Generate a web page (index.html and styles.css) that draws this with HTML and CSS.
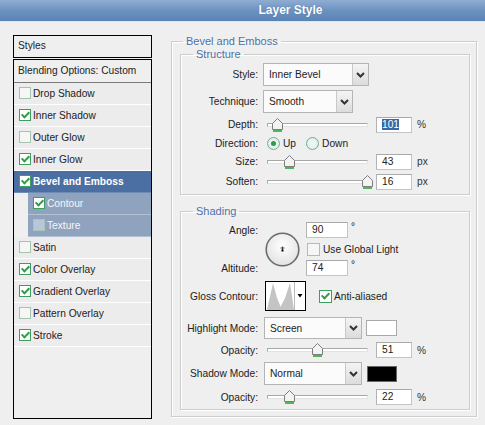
FILE: index.html
```html
<!DOCTYPE html>
<html lang="en">
<head>
  <meta charset="UTF-8">
  <title>Layer Style</title>
  <link rel="stylesheet" href="styles.css">
</head>
<body>
  <div class="titlebar">Layer Style</div>

  <div class="dialog">
    <!-- Lista de estilos -->
    <aside class="sidebar">
      <div class="styles-head">Styles</div>
      <ul class="style-list">
        <li class="blending">Blending Options: Custom</li>
        <li><span class="check"></span>Drop Shadow</li>
        <li><span class="check on"></span>Inner Shadow</li>
        <li><span class="check"></span>Outer Glow</li>
        <li><span class="check on"></span>Inner Glow</li>
        <li class="active"><span class="check on"></span>Bevel and Emboss</li>
        <li class="sub"><span class="check on"></span>Contour</li>
        <li class="sub"><span class="check"></span>Texture</li>
        <li><span class="check"></span>Satin</li>
        <li><span class="check on"></span>Color Overlay</li>
        <li><span class="check on"></span>Gradient Overlay</li>
        <li><span class="check"></span>Pattern Overlay</li>
        <li><span class="check on"></span>Stroke</li>
      </ul>
    </aside>

    <main class="options">
      <fieldset class="group">
        <legend>Bevel and Emboss</legend>

        <!-- Structure -->
        <fieldset class="panel structure">
          <legend>Structure</legend>

          <div class="row row-select first">
            <span class="lbl">Style:</span>
            <div class="select w-style">
              <span class="value">Inner Bevel</span>
              <span class="arrow"><svg width="9" height="6" viewBox="0 0 9 6"><polyline points="1,1 4.5,4.5 8,1" fill="none" stroke="#333" stroke-width="2"/></svg></span>
            </div>
          </div>

          <div class="row row-select gap4">
            <span class="lbl">Technique:</span>
            <div class="select w-tech">
              <span class="value">Smooth</span>
              <span class="arrow"><svg width="9" height="6" viewBox="0 0 9 6"><polyline points="1,1 4.5,4.5 8,1" fill="none" stroke="#333" stroke-width="2"/></svg></span>
            </div>
          </div>

          <div class="row row-slider gap3">
            <span class="lbl">Depth:</span>
            <div class="slider">
              <div class="track"></div>
              <span class="thumb" style="left: 5px"><svg width="11" height="14" viewBox="0 0 11 14"><path d="M0.5 5.5 L5.5 0.5 L10.5 5.5 L10.5 11.5 L0.5 11.5 Z" fill="#f3f3f3" stroke="#7d7d7d"/><rect x="1" y="12" width="9" height="2" fill="#4fb65a"/></svg></span>
            </div>
            <span class="num"><span class="selected">101</span></span>
            <span class="unit">%</span>
          </div>

          <div class="row row-radio">
            <span class="lbl">Direction:</span>
            <span class="radio on"></span><span class="radio-text">Up</span>
            <span class="radio down"></span><span class="radio-text">Down</span>
          </div>

          <div class="row row-slider">
            <span class="lbl">Size:</span>
            <div class="slider">
              <div class="track"></div>
              <span class="thumb" style="left: 17px"><svg width="11" height="14" viewBox="0 0 11 14"><path d="M0.5 5.5 L5.5 0.5 L10.5 5.5 L10.5 11.5 L0.5 11.5 Z" fill="#f3f3f3" stroke="#7d7d7d"/><rect x="1" y="12" width="9" height="2" fill="#4fb65a"/></svg></span>
            </div>
            <span class="num">43</span>
            <span class="unit">px</span>
          </div>

          <div class="row row-slider gap3">
            <span class="lbl">Soften:</span>
            <div class="slider">
              <div class="track"></div>
              <span class="thumb" style="left: 95px"><svg width="11" height="14" viewBox="0 0 11 14"><path d="M0.5 5.5 L5.5 0.5 L10.5 5.5 L10.5 11.5 L0.5 11.5 Z" fill="#f3f3f3" stroke="#7d7d7d"/><rect x="1" y="12" width="9" height="2" fill="#4fb65a"/></svg></span>
            </div>
            <span class="num">16</span>
            <span class="unit">px</span>
          </div>
        </fieldset>

        <!-- Shading -->
        <fieldset class="panel shading">
          <legend>Shading</legend>

          <div class="angle-grid">
            <span class="lbl lbl-angle">Angle:</span>
            <div class="dial">
              <svg width="35" height="35" viewBox="0 0 35 35">
                <defs>
                  <radialGradient id="dialFill" cx="50%" cy="40%" r="60%">
                    <stop offset="0" stop-color="#ffffff"/>
                    <stop offset="1" stop-color="#e2e2e2"/>
                  </radialGradient>
                </defs>
                <circle cx="17.5" cy="17.5" r="16.3" fill="url(#dialFill)" stroke="#6c6c6c" stroke-width="1.6"/>
                <line x1="17.5" y1="14.5" x2="17.5" y2="18" stroke="#444" stroke-width="1"/>
                <line x1="15.5" y1="16" x2="19.5" y2="16" stroke="#444" stroke-width="1"/>
                <rect x="16.5" y="17.5" width="2" height="2" fill="#000"/>
              </svg>
            </div>
            <div class="angle-field">
              <span class="num num-wide">90</span><span class="deg">°</span>
            </div>
            <label class="global">
              <span class="check"></span>Use Global Light
            </label>
            <span class="lbl lbl-alt">Altitude:</span>
            <div class="alt-field">
              <span class="num num-wide">74</span><span class="deg">°</span>
            </div>
          </div>

          <div class="row row-gloss">
            <span class="lbl">Gloss Contour:</span>
            <div class="contour">
              <svg width="41" height="30" viewBox="0 0 41 30">
                <rect x="0.5" y="0.5" width="40" height="29" fill="#fff" stroke="#000"/>
                <polygon points="2,29 8,2 12,17 17,29" fill="#c4c4c4"/>
                <polygon points="14,29 20,17 25,2 29,29" fill="#c4c4c4"/>
                <line x1="29.5" y1="1" x2="29.5" y2="29" stroke="#bbb"/>
                <polygon points="32.5,13 37.5,13 35,16.5" fill="#000"/>
              </svg>
            </div>
            <label class="anti">
              <span class="check on"></span>Anti-aliased
            </label>
          </div>

          <div class="row row-mode gap6">
            <span class="lbl">Highlight Mode:</span>
            <div class="select w-mode">
              <span class="value">Screen</span>
              <span class="arrow"><svg width="9" height="6" viewBox="0 0 9 6"><polyline points="1,1 4.5,4.5 8,1" fill="none" stroke="#333" stroke-width="2"/></svg></span>
            </div>
            <span class="swatch white"></span>
          </div>

          <div class="row row-opacity gap3">
            <span class="lbl">Opacity:</span>
            <div class="slider">
              <div class="track"></div>
              <span class="thumb" style="left: 45px"><svg width="11" height="14" viewBox="0 0 11 14"><path d="M0.5 5.5 L5.5 0.5 L10.5 5.5 L10.5 11.5 L0.5 11.5 Z" fill="#f3f3f3" stroke="#7d7d7d"/><rect x="1" y="12" width="9" height="2" fill="#4fb65a"/></svg></span>
            </div>
            <span class="num">51</span>
            <span class="unit">%</span>
          </div>

          <div class="row row-shadow gap4">
            <span class="lbl">Shadow Mode:</span>
            <div class="select w-mode">
              <span class="value">Normal</span>
              <span class="arrow"><svg width="9" height="6" viewBox="0 0 9 6"><polyline points="1,1 4.5,4.5 8,1" fill="none" stroke="#333" stroke-width="2"/></svg></span>
            </div>
            <span class="swatch black"></span>
          </div>

          <div class="row row-opacity gap4">
            <span class="lbl">Opacity:</span>
            <div class="slider">
              <div class="track"></div>
              <span class="thumb" style="left: 17px"><svg width="11" height="14" viewBox="0 0 11 14"><path d="M0.5 5.5 L5.5 0.5 L10.5 5.5 L10.5 11.5 L0.5 11.5 Z" fill="#f3f3f3" stroke="#7d7d7d"/><rect x="1" y="12" width="9" height="2" fill="#4fb65a"/></svg></span>
            </div>
            <span class="num">22</span>
            <span class="unit">%</span>
          </div>
        </fieldset>
      </fieldset>
    </main>
  </div>
</body>
</html>
```

FILE: styles.css
```css
* {
  box-sizing: border-box;
  margin: 0;
  padding: 0;
}

body {
  width: 485px;
  height: 425px;
  overflow: hidden;
  background-color: #efefef;
  color: #222;
  font-family: Tahoma, "Liberation Sans", Arial, sans-serif;
  font-size: 10.2px;
}

/* Barra de título */
.titlebar {
  height: 22px;
  padding-left: 96px;
  text-align: center;
  line-height: 21px;
  font-size: 12px;
  font-weight: bold;
  color: #fff;
  background: linear-gradient(#8eadd2, #6c92c0 50%, #5a83b6);
  border-bottom: 1px solid #dde4ee;
  text-shadow: 0 0 1px #3e628f;
}

.dialog {
  display: flex;
  gap: 19px;
  padding: 13px 0 0 13px;
}

/* Lista lateral */
.sidebar {
  width: 139px;
  display: flex;
  flex-direction: column;
  gap: 1px;
}

.styles-head {
  height: 23px;
  border: 1px solid #000;
  line-height: 20px;
  padding-left: 4px;
}

.style-list {
  list-style: none;
  border: 1px solid #000;
  height: 360px;
}

.style-list li {
  height: 22px;
  border-bottom: 1px solid #fff;
  display: flex;
  align-items: center;
  gap: 2px;
  padding-left: 5px;
  padding-bottom: 1px;
  background-color: #ececec;
}

.style-list li.blending {
  height: 23px;
  border-bottom: 1px solid #7a7a7a;
  padding-left: 4px;
  background-color: #efefef;
}

.style-list li.active {
  background-color: #4b6fa3;
  color: #fff;
  font-weight: bold;
  border-bottom-color: #6f8cb5;
}

.style-list li.sub {
  margin-left: 14px;
  background-color: #8fa3bf;
  color: #f4f6fa;
  border-bottom-color: #b3c1d4;
}

/* Caixas de seleção */
.check {
  position: relative;
  flex: none;
  width: 12px;
  height: 12px;
  border: 1px solid #a3c4ad;
  background-color: #f6f6f6;
}

.check.on {
  border-color: #3f9d5e;
  background-color: #fff;
}

.check.on::after {
  content: "";
  position: absolute;
  left: 3px;
  top: 0;
  width: 3px;
  height: 6px;
  border: solid #2f9a48;
  border-width: 0 2px 2px 0;
  transform: rotate(45deg);
}

.sub .check {
  background-color: #b9c6d8;
  border-color: #a9c7b8;
}

.sub .check.on {
  background-color: #fff;
  border-color: #3f9d5e;
}

/* Painel de opções */
.options {
  width: 306px;
}

fieldset {
  border: 1px solid #cdcdcd;
  box-shadow: inset 1px 1px 0 #fff, 1px 1px 0 #fff;
}

legend {
  font-size: 11px;
  line-height: 13px;
  color: #4d72a8;
  padding: 0 3px;
}

.group {
  padding: 0 6px 6px 8px;
}

.group > legend {
  margin-left: 3px;
}

.panel {
  padding: 0 0 4px 0;
}

.panel > legend {
  margin-left: 12px;
}

.shading {
  margin-top: 10px;
}

.row {
  display: flex;
  align-items: center;
}

.lbl {
  flex: none;
  width: 77px;
  margin-right: 5px;
  text-align: right;
}

.first { margin-top: 2px; }
.gap3 { margin-top: 3px; }
.gap4 { margin-top: 4px; }
.gap6 { margin-top: 6px; }

.row-select { height: 23px; }
.row-slider { height: 17px; }
.row-radio { height: 20px; }
.row-opacity { height: 16px; }
.row-mode { height: 22px; }
.row-shadow { height: 23px; }

/* Listas suspensas */
.select {
  display: flex;
  height: 100%;
  border: 1px solid #b4b4b4;
  background-color: #fbfbfb;
}

.select .value {
  flex: 1;
  padding-left: 5px;
  align-self: center;
}

.select .arrow {
  width: 16px;
  display: flex;
  align-items: center;
  justify-content: center;
  border-left: 1px solid #c9c9c9;
  background: linear-gradient(#f4f4f4, #dcdcdc);
}

.w-style { width: 106px; }
.w-tech { width: 90px; }
.w-mode { width: 98px; margin-left: 1px; }

/* Controles deslizantes */
.slider {
  position: relative;
  width: 101px;
  height: 14px;
  margin-left: 4px;
}

.track {
  position: absolute;
  left: 0;
  right: 0;
  top: 5px;
  height: 4px;
  border: 1px solid #a8a8a8;
  border-bottom-color: #e2e2e2;
  border-right-color: #e2e2e2;
  background-color: #fff;
}

.thumb {
  position: absolute;
  top: 0;
  width: 11px;
  height: 14px;
}

.thumb svg {
  display: block;
}

.num {
  flex: none;
  width: 36px;
  height: 16px;
  margin-left: 8px;
  padding-left: 5px;
  line-height: 14px;
  border: 1px solid #c4c4c4;
  border-top-color: #a9a9a9;
  border-left-color: #b3b3b3;
  background-color: #fff;
}

.selected {
  background-color: #3a67a8;
  color: #fff;
}

.unit {
  margin-left: 5px;
  color: #333;
}

/* Botões de opção */
.radio {
  position: relative;
  flex: none;
  width: 13px;
  height: 13px;
  margin-left: 4px;
  border: 1px solid #78aa92;
  border-radius: 50%;
  background: radial-gradient(#f4faf8, #d6ebe4);
}

.radio.on::after {
  content: "";
  position: absolute;
  left: 3px;
  top: 3px;
  width: 5px;
  height: 5px;
  border-radius: 50%;
  background-color: #2f9a48;
}

.radio.down {
  margin-left: 10px;
}

.radio-text {
  margin-left: 3px;
}

/* Ângulo e altitude */
.angle-grid {
  display: grid;
  grid-template-columns: 82px 43px 1fr;
  grid-template-rows: 16px 22px 16px;
  margin-top: 4px;
}

.angle-grid .lbl {
  align-self: center;
}

.lbl-angle { grid-column: 1; grid-row: 1; }
.lbl-alt { grid-column: 1; grid-row: 3; }

.dial {
  grid-column: 2;
  grid-row: 1 / 4;
  align-self: center;
  margin-left: 2px;
  height: 35px;
}

.dial svg {
  display: block;
}

.angle-field,
.alt-field {
  grid-column: 3;
  display: flex;
}

.angle-field { grid-row: 1; }
.alt-field { grid-row: 3; }

.num-wide {
  width: 42px;
  margin-left: 0;
}

.deg {
  margin-left: 3px;
  line-height: 9px;
}

.global {
  grid-column: 3;
  grid-row: 2;
  display: flex;
  align-items: center;
  gap: 3px;
  margin-left: 1px;
}

.global .check {
  width: 13px;
  height: 13px;
}

.row-gloss {
  height: 30px;
  margin-top: 5px;
}

.contour {
  margin-left: 2px;
  height: 30px;
}

.contour svg {
  display: block;
}

.anti {
  display: flex;
  align-items: center;
  gap: 2px;
  margin-left: 13px;
  padding-right: 4px;
  background-color: #ecefe9;
}

.anti .check {
  width: 13px;
  height: 13px;
}

.swatch {
  width: 31px;
  height: 16px;
  margin-left: 4px;
  border: 1px solid #aaa;
}

.swatch.white {
  background-color: #fff;
}

.swatch.black {
  background-color: #000;
  border-color: #666;
  margin-left: 5px;
  width: 30px;
}
```
